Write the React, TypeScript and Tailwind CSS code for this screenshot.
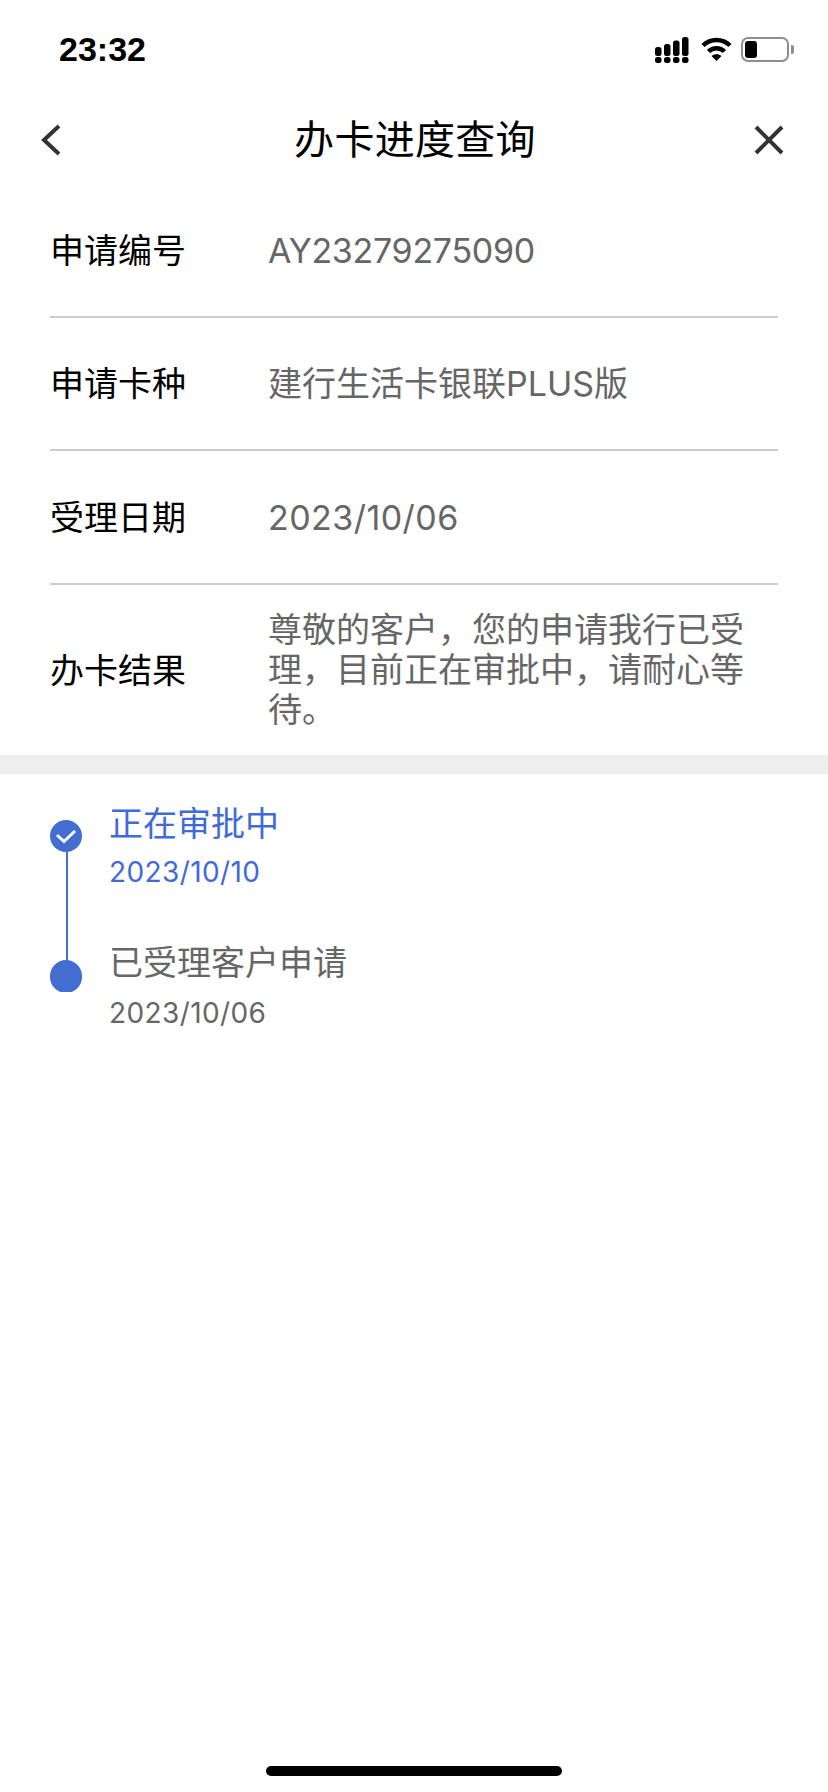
import React from 'react';

const rows = [
    { label: '申请编号', value: 'AY23279275090', height: 'h-[134px]', tracking: 'tracking-[-0.3px]' },
    { label: '申请卡种', value: '建行生活卡银联PLUS版', height: 'h-[133px]', tracking: 'tracking-[0px]' },
    { label: '受理日期', value: '2023/10/06', height: 'h-[134px]', tracking: 'tracking-[0.45px]' },
];

const fontStack = "font-['Inter','Noto_Sans_CJK_SC',sans-serif]";

const SignalIcon = () => (
    <svg width="34" height="26" viewBox="0 0 34 26" fill="#000">
        <rect x="0" y="10" width="6.5" height="9" rx="2.5" />
        <rect x="9" y="7" width="6.5" height="12" rx="2.5" />
        <rect x="18" y="3.5" width="6.5" height="15.5" rx="2.5" />
        <rect x="27" y="0" width="6.5" height="19" rx="2.5" />
        <rect x="0" y="20" width="6.5" height="6" rx="2.5" />
        <rect x="9" y="20" width="6.5" height="6" rx="2.5" />
        <rect x="18" y="20" width="6.5" height="6" rx="2.5" />
        <rect x="27" y="20" width="6.5" height="6" rx="2.5" />
    </svg>
);

const WifiIcon = () => (
    <svg width="31" height="24" viewBox="0 0 31 24" fill="none" stroke="#000" strokeWidth="4.5">
        <path d="M2 8.5C9.5 1 21.5 1 29 8.5" />
        <path d="M7.5 14.5C12 10 19 10 23.5 14.5" />
        <path d="M15.5 24L10.5 19C13.5 16.5 17.5 16.5 20.5 19Z" fill="#000" stroke="none" />
    </svg>
);

const BatteryIcon = () => (
    <div className="flex items-center gap-[2px]">
        <div className="w-[48px] h-[25px] rounded-[7px] border-2 border-[#8e8e8e] p-[2px] flex">
            <div className="w-[12px] bg-black rounded-[3px]" />
        </div>
        <div className="w-[3px] h-[9px] bg-[#8e8e8e] rounded-r-[2px]" />
    </div>
);

export default function App() {
    return (
        <div className={`w-[828px] h-[1792px] bg-white flex flex-col ${fontStack}`}>
            {/* Status bar */}
            <div className="h-[92px] pt-[37px] pl-[59px] pr-[34px] flex justify-between items-start">
                <span className="font-['Liberation_Sans',sans-serif] font-bold text-[34px] leading-[25px] text-black">23:32</span>
                <div className="flex items-start gap-[12px]">
                    <div className="flex items-start gap-[12px] mr-[-3px]">
                        <SignalIcon />
                        <WifiIcon />
                    </div>
                    <BatteryIcon />
                </div>
            </div>

            {/* Header */}
            <div className="h-[92px] pt-[4px] flex items-center justify-between pl-[40px] pr-[44px]">
                <div className="w-[36px]">
                    <svg width="22" height="32" viewBox="0 0 22 32" fill="none" stroke="#333" strokeWidth="4">
                        <path d="M19 2L4 16L19 30" />
                    </svg>
                </div>
                <h1 className="text-[40px] leading-[48px] text-black font-normal tracking-[0.3px]">办卡进度查询</h1>
                <svg width="30" height="30" viewBox="0 0 30 30" fill="none" stroke="#333" strokeWidth="4">
                    <path d="M2 2L28 28M28 2L2 28" />
                </svg>
            </div>

            {/* Info rows */}
            <div className="px-[50px]">
                {rows.map((row) => (
                    <div key={row.label} className={`${row.height} flex items-center border-b-2 border-[#cccccc]`}>
                        <span className="w-[218px] text-[34px] text-black">{row.label}</span>
                        <span className={`text-[34px] text-[#666666] ${row.tracking}`}>{row.value}</span>
                    </div>
                ))}
                <div className="h-[170px] flex items-center">
                    <span className="w-[218px] shrink-0 text-[34px] text-black">办卡结果</span>
                    <span className="text-[34px] leading-[40px] text-[#666666]">
                        尊敬的客户，您的申请我行已受理，目前正在审批中，请耐心等待。
                    </span>
                </div>
            </div>

            <div className="h-[19px] bg-[#eeeeee]" />

            {/* Timeline */}
            <div className="flex pl-[50px] pt-[46px]">
                <div className="w-[32px] flex flex-col items-center">
                    <div className="w-[32px] h-[32px] rounded-full bg-[#436dd0] flex items-center justify-center">
                        <svg width="22" height="18" viewBox="0 0 22 18" fill="none" stroke="#fff" strokeWidth="3">
                            <path d="M2 8L9 14.5L20 4" />
                        </svg>
                    </div>
                    <div className="w-[2px] h-[108px] ml-[2px] bg-[#436dd0]" />
                    <div className="w-[32px] h-[32px] overflow-hidden">
                        <div className="w-[32px] h-[33px] rounded-full bg-[#436dd0]" />
                    </div>
                </div>
                <div className="ml-[27px] -mt-[20px] flex flex-col">
                    <span className="text-[34px] leading-[48px] text-[#3f6ad8]">正在审批中</span>
                    <span className="text-[28px] leading-[36px] mt-[6px] tracking-[0.4px] text-[#3f6ad8]">2023/10/10</span>
                    <span className="text-[34px] leading-[48px] mt-[49px] text-[#666666]">已受理客户申请</span>
                    <span className="text-[28px] leading-[36px] mt-[8px] tracking-[0.4px] text-[#666666]">2023/10/06</span>
                </div>
            </div>

            {/* Home indicator */}
            <div className="mt-auto mb-[16px] self-center w-[296px] h-[10px] rounded-full bg-black" />
        </div>
    );
}
